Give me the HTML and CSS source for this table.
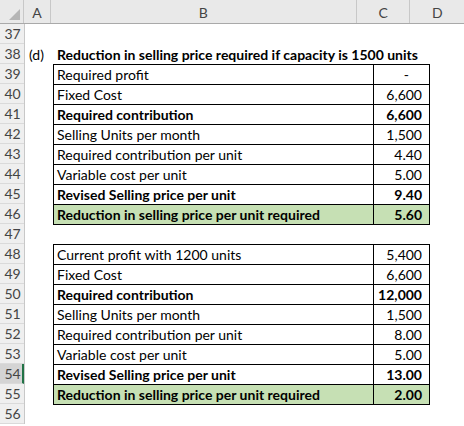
FILE: index.html
```html
<!DOCTYPE html>
<html>
<head>
<meta charset="utf-8">
<link rel="stylesheet" href="styles.css">
</head>
<body>
<div class="sheet">
  <div class="colheads">
    <div class="corner"><span class="tri"></span></div>
    <div class="ch ch-a">A</div>
    <div class="ch ch-b">B</div>
    <div class="ch ch-c">C</div>
    <div class="ch ch-d">D</div>
  </div>
  <div class="body">
    <div class="rowheads">
      <div class="rh">37</div>
      <div class="rh">38</div>
      <div class="rh">39</div>
      <div class="rh">40</div>
      <div class="rh">41</div>
      <div class="rh">42</div>
      <div class="rh">43</div>
      <div class="rh">44</div>
      <div class="rh">45</div>
      <div class="rh">46</div>
      <div class="rh">47</div>
      <div class="rh">48</div>
      <div class="rh">49</div>
      <div class="rh">50</div>
      <div class="rh">51</div>
      <div class="rh">52</div>
      <div class="rh">53</div>
      <div class="rh rh-sel">54</div>
      <div class="rh">55</div>
      <div class="rh">56</div>
    </div>
    <div class="cells">
      <div class="row"></div>
      <div class="row title">
        <div class="cell-a">(d)</div>
        <div class="cell-title">Reduction in selling price required if capacity is 1500 units</div>
      </div>
      <div class="tbl">
        <div class="trow"><div class="lbl">Required profit</div><div class="val dash">-</div></div>
        <div class="trow"><div class="lbl">Fixed Cost</div><div class="val">6,600</div></div>
        <div class="trow bold"><div class="lbl">Required contribution</div><div class="val">6,600</div></div>
        <div class="trow"><div class="lbl">Selling Units per month</div><div class="val">1,500</div></div>
        <div class="trow"><div class="lbl">Required contribution per unit</div><div class="val">4.40</div></div>
        <div class="trow"><div class="lbl">Variable cost per unit</div><div class="val">5.00</div></div>
        <div class="trow bold"><div class="lbl">Revised Selling price per unit</div><div class="val">9.40</div></div>
        <div class="trow bold green"><div class="lbl">Reduction in selling price per unit required</div><div class="val">5.60</div></div>
      </div>
      <div class="row"></div>
      <div class="tbl">
        <div class="trow"><div class="lbl">Current profit with 1200 units</div><div class="val">5,400</div></div>
        <div class="trow"><div class="lbl">Fixed Cost</div><div class="val">6,600</div></div>
        <div class="trow bold"><div class="lbl">Required contribution</div><div class="val">12,000</div></div>
        <div class="trow"><div class="lbl">Selling Units per month</div><div class="val">1,500</div></div>
        <div class="trow"><div class="lbl">Required contribution per unit</div><div class="val">8.00</div></div>
        <div class="trow"><div class="lbl">Variable cost per unit</div><div class="val">5.00</div></div>
        <div class="trow bold"><div class="lbl">Revised Selling price per unit</div><div class="val">13.00</div></div>
        <div class="trow bold green"><div class="lbl">Reduction in selling price per unit required</div><div class="val">2.00</div></div>
      </div>
      <div class="row"></div>
    </div>
  </div>
</div>
</body>
</html>
```

FILE: styles.css
```css
* { box-sizing: border-box; }
html, body { margin: 0; padding: 0; background: #ffffff; }
body {
  width: 464px;
  height: 426px;
  overflow: hidden;
  font-family: Lato, "Liberation Sans", sans-serif;
  font-size: 14px;
  color: #000;
}
.sheet { display: flex; flex-direction: column; }

.colheads {
  display: flex;
  height: 24px;
  background: #e9e9e9;
  border-bottom: 1px solid #a9a9a9;
}
.corner {
  width: 25px;
  position: relative;
  border-right: 1px solid #c8c8c8;
}
.tri {
  position: absolute;
  right: 3px;
  bottom: 3px;
  width: 0;
  height: 0;
  border-left: 11px solid transparent;
  border-bottom: 11px solid #b5b5b5;
}
.ch {
  display: flex;
  align-items: center;
  justify-content: center;
  color: #444;
  font-size: 14px;
  border-right: 1px solid #c8c8c8;
  padding-top: 1px;
}
.ch-a { width: 28px; }
.ch-b { width: 320px; }
.ch-c { width: 56px; }
.ch-d { width: 56px; border-right: none; }

.body { display: flex; }
.rowheads {
  width: 25px;
  display: flex;
  flex-direction: column;
  background: #efefef;
  border-right: 1px solid #c8c8c8;
}
.rh {
  height: 20px;
  line-height: 20px;
  text-align: center;
  font-size: 14px;
  color: #444;
  border-bottom: 1px solid #dadada;
  padding-left: 1px;
}
.rh-sel {
  background: #d4d4d4;
  border-right: 2px solid #217346;
  padding-left: 3px;
}

.cells { display: flex; flex-direction: column; padding-left: 28px; }
.row { height: 20px; }
.title { display: flex; margin-left: -28px; font-weight: bold; }
.cell-a { width: 28px; padding-left: 4px; font-weight: normal; line-height: 21px; }
.cell-title { padding-left: 4px; line-height: 21px; white-space: nowrap; }

.tbl {
  display: flex;
  flex-direction: column;
  border-bottom: 1px solid #000;
  margin-bottom: -1px;
  position: relative;
}
.trow { display: flex; height: 20px; }
.lbl {
  width: 320px;
  border-top: 1px solid #000;
  border-left: 1px solid #000;
  padding-left: 3px;
  line-height: 20px;
  white-space: nowrap;
  overflow: hidden;
}
.val {
  width: 57px;
  border-top: 1px solid #000;
  border-left: 1px solid #000;
  border-right: 1px solid #000;
  text-align: right;
  padding-right: 7px;
  line-height: 20px;
}
.val.dash { padding-right: 20px; }
.bold { font-weight: bold; }
.green .lbl, .green .val { background: #c6e0b4; }
```
